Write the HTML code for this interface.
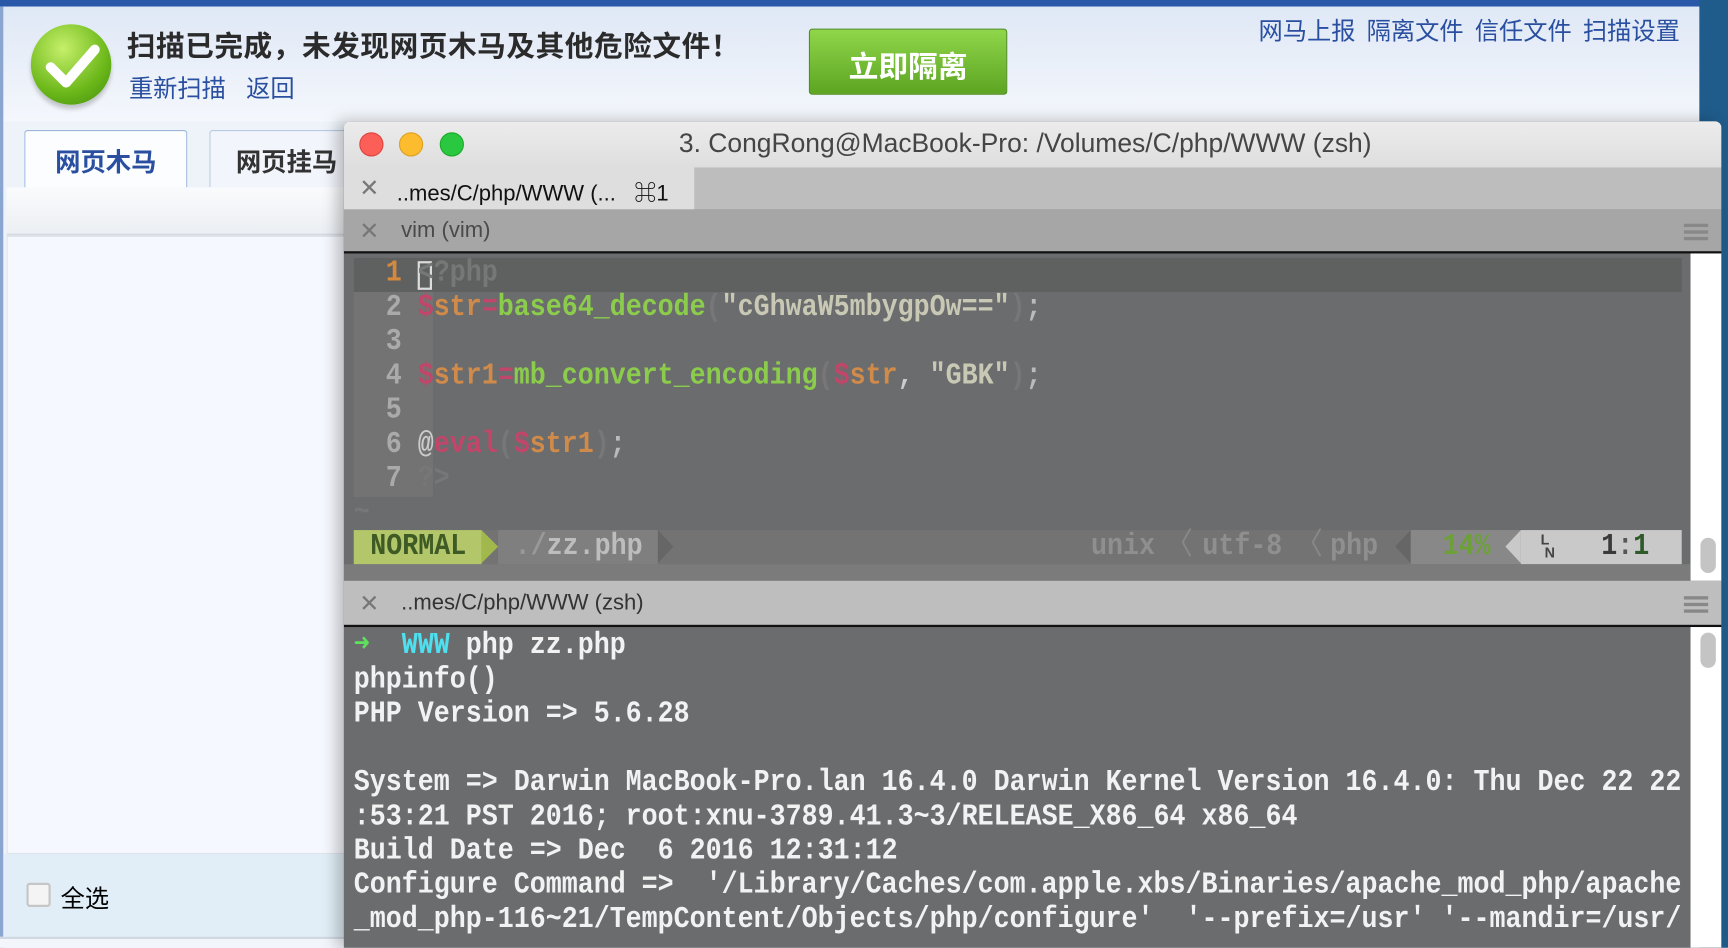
<!DOCTYPE html>
<html><head><meta charset="utf-8"><style>
*{margin:0;padding:0;box-sizing:border-box}
html,body{width:1728px;height:948px;overflow:hidden;background:#eef3fa}
#w{position:absolute;left:0;top:0;width:1568px;height:860px;transform:scale(1.10204);transform-origin:0 0;font-family:"Liberation Sans","Noto Sans CJK SC",sans-serif}
.a{position:absolute}
.cn{font-family:"Liberation Sans","Noto Sans CJK SC",sans-serif}
.mono{font-family:"Liberation Mono","DejaVu Sans Mono",monospace;font-size:24.2px;line-height:26.96px;white-space:pre;font-weight:bold;transform:scaleY(1.15);transform-origin:0 0}
</style></head><body><div id="w">
<!-- background app -->
<div class="a" style="left:0;top:0;width:1568px;height:6px;background:#2a58a8"></div>
<div class="a" style="left:0;top:6px;width:1542px;height:104px;background:linear-gradient(#dfe8f6,#f4f7fc)"></div>
<div class="a" style="left:1542px;top:0;width:26px;height:860px;background:#1f5c8c"></div>
<div class="a" style="left:0;top:6px;width:3px;height:854px;background:#8aa6d0"></div>
<div class="a" style="left:28px;top:22px;width:73px;height:73px;border-radius:50%;background:radial-gradient(circle at 40% 30%,#c6ef6a,#6cb81a 60%,#3f8a0c);box-shadow:0 4px 4px rgba(0,0,0,.2)"></div>
<svg class="a" style="left:38px;top:35px" width="56" height="50"><path d="M8 26 L22 40 L48 10" stroke="#fff" stroke-width="9" fill="none" stroke-linecap="round" stroke-linejoin="round"/></svg>
<div class="a cn" style="left:115px;top:22px;font-size:26px;color:#2b2b2b;font-weight:bold;letter-spacing:0.5px">扫描已完成，未发现网页木马及其他危险文件！</div>
<div class="a cn" style="left:117px;top:63px;font-size:22px;color:#2a4fa0">重新扫描&nbsp;&nbsp;&nbsp;返回</div>
<div class="a" style="left:734px;top:26px;width:180px;height:60px;background:linear-gradient(#8fd64a,#5da522);border:1px solid #4f8f1c;border-radius:3px"></div>
<div class="a cn" style="left:734px;top:39px;width:180px;text-align:center;font-size:27px;color:#fff;font-weight:bold">立即隔离</div>
<div class="a cn" style="left:1142px;top:11px;font-size:22px;color:#2a4fa0;word-spacing:4px">网马上报 隔离文件 信任文件 扫描设置</div>
<div class="a" style="left:22px;top:118px;width:148px;height:52px;background:#fbfdff;border:1px solid #9ab4dc;border-bottom:none;border-radius:3px 3px 0 0"></div>
<div class="a cn" style="left:22px;top:128px;width:148px;text-align:center;font-size:23px;font-weight:bold;color:#2a4fa0">网页木马</div>
<div class="a" style="left:190px;top:118px;width:140px;height:52px;background:#f2f6fc;border:1px solid #b8c8e0;border-bottom:none;border-radius:3px 3px 0 0"></div>
<div class="a cn" style="left:214px;top:128px;font-size:23px;font-weight:bold;color:#333">网页挂马</div>
<div class="a" style="left:6px;top:170px;width:310px;height:44px;background:linear-gradient(#fafbfd,#eceff3);border-bottom:2px solid #d6dbe2"></div>
<div class="a" style="left:6px;top:214px;width:310px;height:561px;background:#f5f8fe;border:1px solid #e0e4ea"></div>
<div class="a" style="left:4px;top:775px;width:310px;height:75px;background:#e1eef7"></div>
<div class="a" style="left:24px;top:801px;width:22px;height:22px;background:#f4f4f4;border:2px solid #c6c6c6;border-radius:3px"></div>
<div class="a cn" style="left:55px;top:798px;font-size:22px;color:#000">全选</div>
<div class="a" style="left:0;top:850px;width:320px;height:10px;background:#f2f6fb;border-top:2px solid #cfd8e2"></div>
<!-- terminal -->
<div class="a" style="left:312px;top:110px;width:1250px;height:750px;background:#6b6c6e;border-radius:6px 6px 0 0;box-shadow:-6px 0 14px rgba(0,0,0,.25);overflow:hidden">
 <div class="a" style="left:0;top:0;width:1250px;height:42px;background:linear-gradient(#ececec,#dedede)"></div>
 <div class="a" style="left:14px;top:10px;width:22px;height:22px;border-radius:50%;background:#fc5f57;border:1px solid #e0443e"></div>
 <div class="a" style="left:50px;top:10px;width:22px;height:22px;border-radius:50%;background:#fdbc2e;border:1px solid #dea123"></div>
 <div class="a" style="left:87px;top:10px;width:22px;height:22px;border-radius:50%;background:#29c840;border:1px solid #1aab29"></div>
 <div class="a" style="left:304px;top:7px;font-size:24px;color:#454545;white-space:nowrap">3. CongRong@MacBook-Pro: /Volumes/C/php/WWW (zsh)</div>
 <div class="a" style="left:0;top:42px;width:1250px;height:38px;background:#bdbdbd"></div>
 <div class="a" style="left:0;top:42px;width:318px;height:38px;background:#dedede"></div>
 <div class="a" style="left:14px;top:48px;font-size:22px;color:#777">✕</div>
 <div class="a" style="left:48px;top:49px;font-size:20px;color:#111">..mes/C/php/WWW (...&nbsp;&nbsp;&nbsp;⌘1</div>
 <div class="a" style="left:0;top:80px;width:1250px;height:38px;background:#a6a6a6"></div>
 <div class="a" style="left:14px;top:87px;font-size:22px;color:#777">✕</div>
 <div class="a" style="left:52px;top:88px;font-size:20px;color:#4a4a4a">vim (vim)</div>
 <div class="a" style="left:1216px;top:93px;width:22px;height:3px;background:#888;box-shadow:0 6px #888,0 12px #888"></div>
 <div class="a" style="left:0;top:118px;width:1250px;height:2px;background:#111"></div>
 <div class="a" style="left:1222px;top:120px;width:28px;height:297px;background:#fff"></div>
 <div class="a" style="left:1231px;top:378px;width:14px;height:32px;border-radius:7px;background:#c4c4c4"></div>
 <div class="a" style="left:9px;top:124px;width:72px;height:217px;background:#737373"></div>
 <div class="a" style="left:9px;top:124px;width:1205px;height:31px;background:#5f6060"></div>
 <div class="a" style="left:67px;top:127px;width:13px;height:26px;border:2px solid #ddd"></div>
 <div class="a mono" style="left:9px;top:124px;color:#aaa"><span style="color:#d5893c">  1</span> <span style="color:#777">&lt;?php</span>
  2 <span style="color:#c2456a">$</span><span style="color:#d08a4a">str</span><span style="color:#c2456a">=</span><span style="color:#8ccc4c">base64_decode</span><span style="color:#777">(</span><span style="color:#c8c8b4">"cGhwaW5mbygpOw=="</span><span style="color:#777">)</span><span style="color:#bbb">;</span>
  3
  4 <span style="color:#c2456a">$</span><span style="color:#d08a4a">str1</span><span style="color:#c2456a">=</span><span style="color:#8ccc4c">mb_convert_encoding</span><span style="color:#777">(</span><span style="color:#c2456a">$</span><span style="color:#d08a4a">str</span><span style="color:#ccc">,</span> <span style="color:#c8c8b4">"GBK"</span><span style="color:#777">)</span><span style="color:#bbb">;</span>
  5
  6 <span style="color:#ccc">@</span><span style="color:#c2456a">eval</span><span style="color:#777">(</span><span style="color:#c2456a">$</span><span style="color:#d08a4a">str1</span><span style="color:#777">)</span><span style="color:#bbb">;</span>
  7 <span style="color:#777">?&gt;</span>
<span style="color:#777">~</span></div>
 <div class="a" style="left:9px;top:371px;width:1205px;height:31px;background:#737373"></div>
 <div class="a" style="left:9px;top:371px;width:116px;height:31px;background:#b3c66a"></div>
 <div class="a" style="left:125px;top:371px;width:0;height:0;border-top:15.5px solid transparent;border-bottom:15.5px solid transparent;border-left:15px solid #a0b84c"></div>
 <div class="a" style="left:140px;top:371px;width:145px;height:31px;background:#7f7f7f"></div>
 <div class="a" style="left:285px;top:371px;width:0;height:0;border-top:15.5px solid transparent;border-bottom:15.5px solid transparent;border-left:14px solid #666"></div>
 <div class="a" style="left:968px;top:371px;width:100px;height:31px;background:#888"></div>
 <div class="a" style="left:1068px;top:371px;width:146px;height:31px;background:#c9c9c9"></div>
 <div class="a" style="left:1054px;top:371px;width:0;height:0;border-top:15.5px solid transparent;border-bottom:15.5px solid transparent;border-right:14px solid #c9c9c9"></div>
 <div class="a" style="left:954px;top:371px;width:0;height:0;border-top:15.5px solid transparent;border-bottom:15.5px solid transparent;border-right:14px solid #666"></div>
 <div class="a mono" style="left:24px;top:372px;color:#3e5b26">NORMAL</div>
 <div class="a mono" style="left:155px;top:372px;color:#bdbdbd"><span style="color:#999">./</span>zz.php</div>
 <div class="a mono" style="left:678px;top:372px;color:#8f8f8f">unix</div>
 <div class="a mono" style="left:746px;top:372px;color:#888;font-weight:normal">〈</div>
 <div class="a mono" style="left:779px;top:372px;color:#8f8f8f">utf-8</div>
 <div class="a mono" style="left:864px;top:372px;color:#888;font-weight:normal">〈</div>
 <div class="a mono" style="left:895px;top:372px;color:#8f8f8f">php</div>
 <div class="a mono" style="left:997px;top:372px;color:#6ea03a">14%</div>
 <div class="a" style="left:1086px;top:374px;font-size:13px;line-height:12px;color:#444;font-weight:bold">L<br>&nbsp;N</div>
 <div class="a mono" style="left:1141px;top:372px;color:#3a3a3a">1<span style="color:#555">:</span><span style="color:#2e5a2a">1</span></div>
 <div class="a" style="left:0;top:402px;width:1222px;height:15px;background:#7b7b7b"></div>
 <div class="a" style="left:0;top:417px;width:1250px;height:40px;background:#bebebe"></div>
 <div class="a" style="left:14px;top:425px;font-size:22px;color:#777">✕</div>
 <div class="a" style="left:52px;top:426px;font-size:20px;color:#333">..mes/C/php/WWW (zsh)</div>
 <div class="a" style="left:1216px;top:431px;width:22px;height:3px;background:#888;box-shadow:0 6px #888,0 12px #888"></div>
 <div class="a" style="left:0;top:457px;width:1250px;height:2px;background:#111"></div>
 <div class="a" style="left:1222px;top:459px;width:28px;height:291px;background:#fff"></div>
 <div class="a" style="left:1231px;top:464px;width:14px;height:32px;border-radius:7px;background:#c4c4c4"></div>
 <div class="a mono" style="left:9px;top:462px;color:#f2f2f2"><span style="color:#5fe05f">➜</span>  <span style="color:#4fe0f0">WWW</span> php zz.php
phpinfo()
PHP Version =&gt; 5.6.28

System =&gt; Darwin MacBook-Pro.lan 16.4.0 Darwin Kernel Version 16.4.0: Thu Dec 22 22
:53:21 PST 2016; root:xnu-3789.41.3~3/RELEASE_X86_64 x86_64
Build Date =&gt; Dec  6 2016 12:31:12
Configure Command =&gt;  '/Library/Caches/com.apple.xbs/Binaries/apache_mod_php/apache
_mod_php-116~21/TempContent/Objects/php/configure'  '--prefix=/usr' '--mandir=/usr/</div>
</div>
</div></body></html>
